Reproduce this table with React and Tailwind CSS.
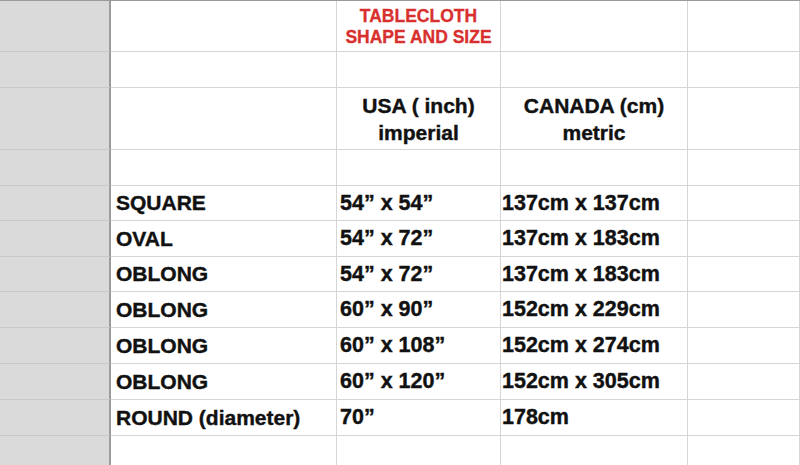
import React from "react";

const rows = [
  ["SQUARE", "54” x 54”", "137cm x 137cm"],
  ["OVAL", "54” x 72”", "137cm x 183cm"],
  ["OBLONG", "54” x 72”", "137cm x 183cm"],
  ["OBLONG", "60” x 90”", "152cm x 229cm"],
  ["OBLONG", "60” x 108”", "152cm x 274cm"],
  ["OBLONG", "60” x 120”", "152cm x 305cm"],
  ["ROUND (diameter)", "70”", "178cm"],
];

const heights = ["h-[51px]", "h-[36px]", "h-[62px]", "h-[36px]", "h-[35px]", "h-[36px]", "h-[35px]", "h-[36px]", "h-[36px]", "h-[36px]", "h-[36px]", "h-[30px]"];

function Row({ h, children }) {
  return (
    <div className={`flex ${h}`}>
      <div className="w-[111px] shrink-0 bg-[#dadada] border-r-2 border-r-[#9c9c9c] border-b border-b-[#c9c9c9]" />
      {children}
    </div>
  );
}

function Cell({ w, className = "", children }) {
  return (
    <div className={`${w} shrink-0 border-r border-b border-[#d6d6d6] flex items-center ${className}`}>
      {children}
    </div>
  );
}

export default function App() {
  const cols = ["w-[226px]", "w-[164px]", "w-[187px]", "w-[112px]"];
  return (
    <div
      className="w-[800px] h-[465px] overflow-hidden bg-white border-t border-t-[#9a9a9a] text-[#111] font-bold"
      style={{ fontFamily: '"Liberation Sans", Arial, sans-serif' }}
    >
      <Row h={heights[0]}>
        <Cell w={cols[0]} />
        <Cell w={cols[1]} className="justify-center">
          <div className="text-[#d8302e] text-[17.5px] leading-[21px] text-center pt-[1px] [-webkit-text-stroke:0.3px_#d8302e]">
            TABLECLOTH
            <br />
            SHAPE AND SIZE
          </div>
        </Cell>
        <Cell w={cols[2]} />
        <Cell w={cols[3]} />
      </Row>
      <Row h={heights[1]}>
        {cols.map((c, i) => (
          <Cell key={i} w={c} />
        ))}
      </Row>
      <Row h={heights[2]}>
        <Cell w={cols[0]} />
        <Cell w={cols[1]} className="justify-center">
          <div className="text-[21px] leading-[27px] text-center [-webkit-text-stroke:0.4px_#111]">
            USA ( inch)
            <br />
            imperial
          </div>
        </Cell>
        <Cell w={cols[2]} className="justify-center">
          <div className="text-[21px] leading-[27px] text-center [-webkit-text-stroke:0.4px_#111]">
            CANADA (cm)
            <br />
            metric
          </div>
        </Cell>
        <Cell w={cols[3]} />
      </Row>
      <Row h={heights[3]}>
        {cols.map((c, i) => (
          <Cell key={i} w={c} />
        ))}
      </Row>
      {rows.map((r, idx) => (
        <Row key={idx} h={heights[4 + idx]}>
          <Cell w={cols[0]} className="pl-[5px] text-[21px] whitespace-nowrap [-webkit-text-stroke:0.4px_#111]">
            {r[0]}
          </Cell>
          <Cell w={cols[1]} className="pl-[3px] text-[21.5px] whitespace-nowrap [-webkit-text-stroke:0.4px_#111]">
            {r[1]}
          </Cell>
          <Cell w={cols[2]} className="pl-[1px] text-[21.5px] whitespace-nowrap [-webkit-text-stroke:0.4px_#111]">
            {r[2]}
          </Cell>
          <Cell w={cols[3]} />
        </Row>
      ))}
      <Row h={heights[11]}>
        {cols.map((c, i) => (
          <Cell key={i} w={c} />
        ))}
      </Row>
    </div>
  );
}
